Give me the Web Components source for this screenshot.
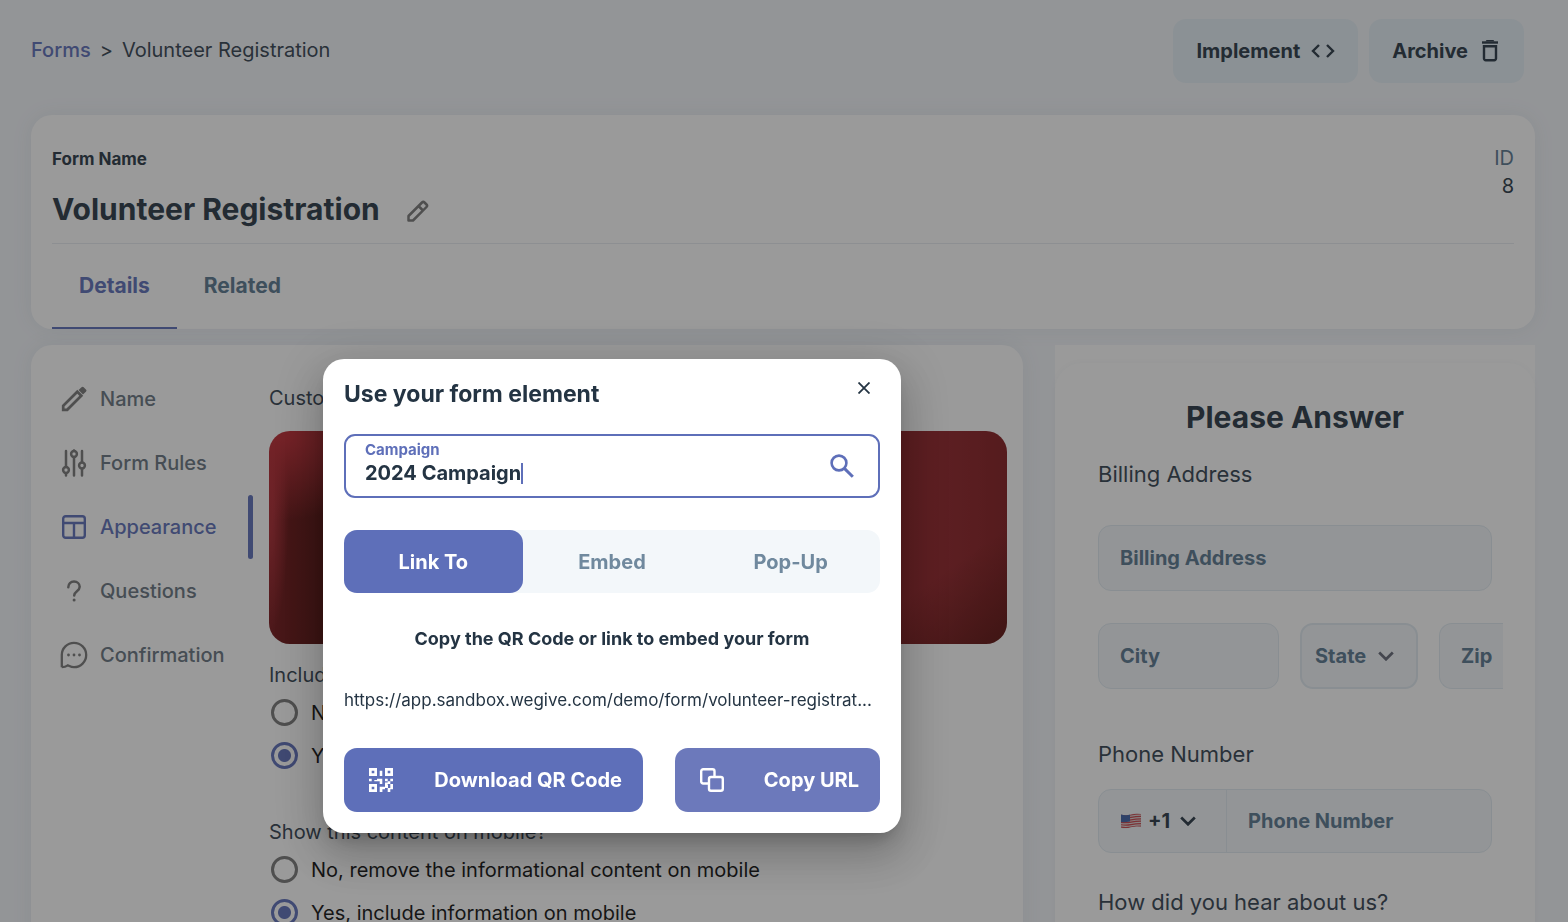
<!DOCTYPE html>
<html lang="en">
<head>
<meta charset="utf-8">
<meta name="viewport" content="width=device-width, initial-scale=1">
<title>Volunteer Registration</title>
<style>
  :root {
    --ink: #2a3946;
    --text: #354452;
    --muted: #5b7991;
    --primary: #5e6fb9;
    --field: #f3f6fa;
    --line: #e0eaf1;
    --page: #f3f6fa;
    --icon: #797979;
  }
  html, body { height: 100%; }
  body {
    margin: 0;
    overflow: hidden;
    background: var(--page);
    color: var(--ink);
    font-family: Inter, "Liberation Sans", sans-serif;
    font-size: 20px;
    line-height: 28px;
  }
</style>
</head>
<body>
<form-page></form-page>
<share-dialog></share-dialog>

<script>
const RESET = `*,*::before,*::after{box-sizing:border-box}
  button,input,select{font:inherit;color:inherit;margin:0}
  button{border:0;background:none;padding:0}
  h1,h2,h3,p{margin:0}`;

function define(name, html, extra) {
  const tpl = document.createElement('template');
  tpl.innerHTML = html.replace('<style>', '<style>' + RESET);
  customElements.define(name, class extends HTMLElement {
    constructor() {
      super();
      this.attachShadow({ mode: 'open' }).append(tpl.content.cloneNode(true));
    }
    connectedCallback() { if (extra) extra(this, this.shadowRoot); }
  });
}

/* ---------- icons ---------- */
const ICONS = {
  code: ['0 0 24 16', '<path d="M8 2 2 8l6 6M16 2l6 6-6 6" fill="none" stroke="currentColor" stroke-width="2.400"/>'],
  trash: ['-1 0 22 22', '<path d="M2 2.500h16" fill="none" stroke="currentColor" stroke-width="2.400"/><path d="M6.500 0h7l1 1.500h-9z" fill="currentColor"/><path d="M4 6.200h12v12.300a1.700 1.700 0 0 1-1.700 1.700H5.700A1.700 1.700 0 0 1 4 18.500z" fill="none" stroke="currentColor" stroke-width="2.400"/>'],
  edit: ['0 0 22 22', '<path d="M1.500 20.500v-4.500L15 2.500a1.800 1.800 0 0 1 2.500 0l2 2a1.800 1.800 0 0 1 0 2.500L6 20.500zM11.500 6l4.500 4.500" fill="none" stroke="currentColor" stroke-width="2.500" stroke-linejoin="round"/>'],
  pencil: ['0 0 26 26', '<path d="M2.200 23.800v-4L16.300 5.700l4 4L6.200 23.800z" fill="none" stroke="currentColor" stroke-width="2.700"/><path d="M17.600 4 20.500 1.300a1.500 1.500 0 0 1 2.200 0L24.900 3.500a1.500 1.500 0 0 1 0 2.200L22 8.400z" fill="currentColor"/>'],
  sliders: ['0 0 26 28', '<g fill="none" stroke="currentColor" stroke-width="2.500" stroke-linecap="round"><path d="M5 2v16M5 25v1.500M13 8v18.500M13 1.500V2M21 2v11M21 20v6.500"/><circle cx="5" cy="21" r="2.900"/><circle cx="13" cy="5" r="2.900"/><circle cx="21" cy="16.500" r="2.900"/></g>'],
  layout: ['0 0 26 26', '<g fill="none" stroke="currentColor" stroke-width="2.400"><rect x="2.200" y="2.200" width="21.600" height="21.600" rx="2.500"/><path d="M2 9h22M13 9v15"/></g>'],
  question: ['0 0 26 26', '<path d="M7.300 9.200C7.300 5.800 9.700 3.600 13 3.600s5.700 2.200 5.700 5.200c0 4.400-5.500 4.300-5.500 8.600" fill="none" stroke="currentColor" stroke-width="2.500" stroke-linecap="round"/><circle cx="13.100" cy="22" r="1.500" fill="currentColor"/>'],
  chat: ['0 0 28 28', '<path d="M1.800 26.200V14A12.200 12.200 0 1 1 14 26.200c-2.600 0-4-.9-6.200-1.900-1.600 1.200-3.400 1.900-6 1.900" fill="none" stroke="currentColor" stroke-width="2.300"/><g fill="currentColor"><circle cx="8.500" cy="14" r="1.400"/><circle cx="14" cy="14" r="1.400"/><circle cx="19.500" cy="14" r="1.400"/></g>'],
  chevron: ['0 0 16 10', '<path d="M1.200 1.500 8 8.300l6.800-6.800" fill="none" stroke="currentColor" stroke-width="2.700"/>'],
  close: ['0 0 12 12', '<path d="m.5.5 11 11M11.500.5l-11 11" stroke="currentColor" stroke-width="1.800"/>'],
  search: ['0 0 24 24', '<circle cx="9" cy="9" r="7.400" fill="none" stroke="currentColor" stroke-width="2.600"/><path d="m14.600 14.600 8.200 8.200" stroke="currentColor" stroke-width="3"/>'],
  qr: ['0 0 24 24', '<path fill-rule="evenodd" fill="currentColor" d="M0 0h8v8H0zM2.700 2.700v2.600h2.600V2.700zM16 0h8v8h-8zM18.700 2.700v2.600h2.600V2.700zM0 16h8v8H0zM2.700 18.700v2.600h2.600v-2.600zM10.700 2.700h2.600V8h-2.600zM0 10.700h2.700v2.600H0zM8 10.700h5.300V16h-2.600v-2.700H8zM5.300 12h2.700v1.300H5.300zM16 10.700h2.700v2.600H16zM21.300 10.700H24v2.600h-2.700zM18.700 13.300h2.600V16h-2.600zM16 14.500h2.700V17H16zM21.300 16H24v5.300h-2.700zM10.700 18.700h5.300v2.600h-2.600V24h-2.700zM16 17h3v3h-3zM18.700 20h2.600v4h-2.600z"/>'],
  copy: ['0 0 24 24', '<path d="M8 15.500H3.200a2 2 0 0 1-2-2V3.200a2 2 0 0 1 2-2h9.300a2 2 0 0 1 2 2V8" fill="none" stroke="currentColor" stroke-width="2.400"/><rect x="9" y="9" width="13.800" height="13.800" rx="2" fill="none" stroke="currentColor" stroke-width="2.400"/>'],
  flag: ['0 0 22 16', '<clipPath id="f"><path d="M1 1.500C5 3 8 2 11 1.200S18 0 21 1v13c-3-1-7-.5-10 .2S5 16 1 14.800z"/></clipPath><g clip-path="url(#f)"><path fill="#dcd6d6" d="M0 0h22v16H0z"/><path stroke="#c9444b" stroke-width="1.200" fill="none" d="M0 2q6 1 11 0t11-1M0 4.400q6 1 11 0t11-1M0 6.800q6 1 11 0t11-1M0 9.200q6 1 11 0t11-1M0 11.600q6 1 11 0t11-1M0 14q6 1 11 0t11-1"/><path fill="#3d62a8" d="M0 1h10v7.500q-5 1-10 .5z"/></g>']
};
customElements.define('ui-icon', class extends HTMLElement {
  constructor() { super(); this.attachShadow({ mode: 'open' }); }
  connectedCallback() {
    const [box, art] = ICONS[this.getAttribute('name')];
    const [, , w, h] = box.split(' ');
    this.shadowRoot.innerHTML = `<style>:host{display:inline-flex;flex:none}svg{display:block}</style>
      <svg width="${w}" height="${h}" viewBox="${box}" aria-hidden="true">${art}</svg>`;
  }
});

/* ---------- top bar ---------- */
define('soft-button', `<style>
  :host{display:block}
  button{display:flex;align-items:center;gap:11px;height:64px;padding:0 23px;border-radius:13px;background:#e4eff6;font-weight:700}
</style><button type="button"><slot></slot></button>`);

define('top-bar', `<style>
  :host{display:flex;justify-content:space-between;align-items:center;padding-right:11px}
  nav{display:flex;gap:9px;color:var(--text);padding-bottom:2px}
  a{color:var(--primary);font-weight:500;text-decoration:none}
  .actions{display:flex;gap:11px}
</style>
<nav aria-label="Breadcrumb"><a href="#forms">Forms</a><span>&gt;</span><span>Volunteer Registration</span></nav>
<div class="actions">
  <soft-button>Implement <ui-icon name="code"></ui-icon></soft-button>
  <soft-button>Archive <ui-icon name="trash"></ui-icon></soft-button>
</div>`);

/* ---------- form header card ---------- */
define('form-header', `<style>
  :host{display:block;background:#fff;border-radius:21px;padding:29px 21px 0;box-shadow:0 0 21px rgba(60,80,110,.08)}
  .top{display:flex;justify-content:space-between;padding-bottom:14px;border-bottom:1px solid #e8ecf0}
  .label{font-size:17px;font-weight:700;line-height:30px}
  .title{display:flex;align-items:center;gap:27px;margin-top:15px}
  h1{font-size:30px;line-height:40px;font-weight:700}
  .title button{color:var(--icon);display:flex;padding-top:4px}
  dl{margin:0;text-align:right}
  dt{color:var(--muted)} dd{margin:0}
  .tabs{display:flex}
  .tabs button{height:85px;padding:0 27px;font-size:21px;font-weight:700;color:var(--muted);border-bottom:2px solid transparent}
  .tabs button[aria-selected=true]{color:var(--primary);border-color:var(--primary)}
</style>
<div class="top">
  <div>
    <p class="label">Form Name</p>
    <div class="title"><h1>Volunteer Registration</h1><button type="button" aria-label="Edit name"><ui-icon name="edit"></ui-icon></button></div>
  </div>
  <dl><dt>ID</dt><dd>8</dd></dl>
</div>
<div class="tabs" role="tablist">
  <button type="button" role="tab" aria-selected="true">Details</button>
  <button type="button" role="tab" aria-selected="false">Related</button>
</div>`);

/* ---------- side navigation ---------- */
define('nav-item', `<style>
  :host{display:block;color:var(--icon)}
  a{display:grid;grid-template-columns:28px 1fr;align-items:center;gap:12px;height:64px;padding-left:29px;color:inherit;text-decoration:none;font-weight:500;border-right:5px solid transparent}
  ui-icon{justify-self:center}
  span{color:#687581}
  :host([current]) a{position:relative}
  :host([current]), :host([current]) span{color:var(--primary)}
  :host([current]) a::after{content:"";position:absolute;right:-5px;top:0;bottom:0;width:5px;border-radius:3px;background:var(--primary)}
</style><a href="#"><ui-icon name="pencil"></ui-icon><span><slot></slot></span></a>`,
(host, root) => {
  const icon = root.querySelector('ui-icon');
  const fresh = document.createElement('ui-icon');
  fresh.setAttribute('name', host.getAttribute('icon'));
  icon.replaceWith(fresh);
});

define('side-nav', `<style>
  :host{display:block;width:222px;flex:none;padding-top:22px}
</style>
<nav aria-label="Form sections">
  <nav-item icon="pencil">Name</nav-item>
  <nav-item icon="sliders">Form Rules</nav-item>
  <nav-item icon="layout" current>Appearance</nav-item>
  <nav-item icon="question">Questions</nav-item>
  <nav-item icon="chat">Confirmation</nav-item>
</nav>`);

/* ---------- appearance settings ---------- */
define('radio-list', `<style>
  :host{display:block}
  fieldset{border:0;margin:0;padding:0;min-width:0}
  legend{padding:0;color:var(--text);margin-bottom:2px}
  label{display:flex;align-items:center;gap:13px;height:43px;padding-left:2px;line-height:18px;color:#121212}
  input{appearance:none;width:27px;height:27px;border:3px solid var(--icon);border-radius:50%;flex:none}
  input:checked{border-color:var(--primary);background:radial-gradient(circle,var(--primary) 6px,transparent 7px)}
</style>
<fieldset><legend></legend></fieldset>`,
(host, root) => {
  const set = root.querySelector('fieldset');
  if (set.children.length > 1) return;
  root.querySelector('legend').textContent = host.getAttribute('question');
  host.getAttribute('options').split('|').forEach((text, i) => {
    const label = document.createElement('label');
    const input = document.createElement('input');
    input.type = 'radio';
    input.name = 'choice';
    input.defaultChecked = i === 1;
    label.append(input, text);
    set.append(label);
  });
});

define('appearance-settings', `<style>
  :host{display:block;flex:1;min-width:0;padding:39px 16px 0}
  p{color:var(--text)}
  .banner{height:213px;margin:19px 0 17px;border-radius:21px;
    background:
      radial-gradient(ellipse 110px 90px at 10px 0,#bc2a33 10%,transparent),
      radial-gradient(ellipse 20px 130px at 0 35%,#a82830 20%,transparent),
      linear-gradient(325deg,rgba(70,10,5,.65),transparent 16%),
      linear-gradient(90deg,#74161a,#55100e 7%,#450e0a 16%,#85181b 70%,#8c1f23 84%,#93242a 90%,#841c20)}
  radio-list + radio-list{margin-top:41px}
</style>
<p>Custom</p>
<div class="banner" role="img" aria-label="Red fabric banner"></div>
<radio-list question="Include content?" options="No|Yes"></radio-list>
<radio-list question="Show this content on mobile?" options="No, remove the informational content on mobile|Yes, include information on mobile"></radio-list>`);

/* ---------- form preview ---------- */
define('form-preview', `<style>
  :host{display:block;background:#fff;padding-top:18px}
  form{border-radius:27px;padding:34px 32px 0 43px;box-shadow:0 0 6px rgba(60,80,110,.04);height:100%}
  h2{font-size:30px;line-height:40px;font-weight:700;text-align:center;padding-right:11px}
  label,.q{display:block;font-size:22px;line-height:32px;color:var(--text)}
  .q1{margin:21px 0 35px}
  input,select{height:66px;border:1px solid var(--line);border-radius:13px;background:var(--field);padding:0 21px;font-weight:700;color:var(--muted);min-width:0}
  input::placeholder{color:var(--muted);opacity:1}
  .full{width:calc(100% - 11px);display:block}
  .row{display:grid;grid-template-columns:181fr 118fr 64fr;gap:21px;margin:32px 0 49px}
  .row input{width:100%}
  .row input:last-child{border-right:0;border-radius:13px 0 0 13px;padding-right:0}
  .state{display:grid;align-items:center}
  .state>*{grid-area:1/1}
  .state select{appearance:none;width:100%;border-width:2px;padding:0 13px}
  .state ui-icon{justify-self:end;margin-right:24px;color:#656977;pointer-events:none}
  .phone{display:flex;width:calc(100% - 11px);height:64px;margin:19px 0 33px;border:1px solid var(--line);border-radius:13px;background:var(--field);overflow:hidden}
  .phone button{display:flex;align-items:center;gap:6px;width:128px;flex:none;padding-left:21px;border-right:1px solid var(--line);font-weight:700}
  .phone button ui-icon:last-child{margin-left:4px}
  .phone input{flex:1;height:100%;border:0;border-radius:0;background:none}
</style>
<form>
  <h2>Please Answer</h2>
  <label class="q1" for="addr">Billing Address</label>
  <input class="full" id="addr" placeholder="Billing Address">
  <div class="row">
    <input aria-label="City" placeholder="City">
    <span class="state"><select aria-label="State"><option>State</option></select><ui-icon name="chevron"></ui-icon></span>
    <input aria-label="Zip" placeholder="Zip">
  </div>
  <label for="phone">Phone Number</label>
  <div class="phone">
    <button type="button" aria-label="Country code"><ui-icon name="flag"></ui-icon>+1<ui-icon name="chevron"></ui-icon></button>
    <input id="phone" placeholder="Phone Number">
  </div>
  <p class="q">How did you hear about us?</p>
</form>`);

/* ---------- page ---------- */
define('form-page', `<style>
  :host{display:flex;flex-direction:column;gap:16px;height:100%;overflow:hidden;padding:19px 33px 0 31px;box-sizing:border-box}
  top-bar{margin-bottom:16px}
  .columns{display:grid;grid-template-columns:minmax(0,1fr) 480px;gap:32px;flex:none}
  .settings{display:flex;background:#fff;border-radius:21px 21px 0 0;padding-bottom:40px;box-shadow:0 0 21px rgba(60,80,110,.08)}
</style>
<top-bar></top-bar>
<form-header></form-header>
<div class="columns">
  <section class="settings"><side-nav></side-nav><appearance-settings></appearance-settings></section>
  <form-preview></form-preview>
</div>`);

/* ---------- dialog ---------- */
define('share-dialog', `<style>
  :host{position:fixed;inset:0;display:flex;align-items:center;justify-content:center;padding:270px 344px 0 0;background:rgba(26,26,26,.445)}
  .panel{width:578px;max-width:100%;background:#fff;border-radius:21px;padding:21px;color:#243443;
    box-shadow:0 11px 15px -7px rgba(0,0,0,.2),0 24px 38px 3px rgba(0,0,0,.14),0 9px 46px 8px rgba(0,0,0,.12)}
  header{display:flex;justify-content:space-between;align-items:flex-start}
  h2{font-size:23px;line-height:28px;font-weight:700}
  header button{display:flex;padding:2px 10px}
  .field{display:flex;align-items:center;height:64px;margin-top:26px;padding:0 24px 0 19px;border:2px solid var(--primary);border-radius:11px;color:var(--primary)}
  .field div{flex:1;min-width:0;padding-bottom:6px}
  .field label{display:block;font-size:15px;line-height:20px;font-weight:700}
  .entry{display:flex;align-items:center}
  .entry input{field-sizing:content;border:0;outline:0;padding:0;background:none;height:26px;font-weight:700;color:#243443}
  .caret{width:2px;height:21px;background:var(--primary)}
  .tabs{display:grid;grid-template-columns:repeat(3,1fr);margin-top:32px;border-radius:13px;background:#f3f7fa}
  .tabs button{height:63px;border-radius:13px;font-weight:700;color:#70899e}
  .tabs [aria-selected=true]{background:var(--primary);color:#fff}
  h3{font-size:18px;line-height:28px;font-weight:700;text-align:center;margin-top:32px}
  .url{font-size:17px;line-height:28px;margin-top:33px;white-space:nowrap;overflow:hidden;text-overflow:ellipsis}
  footer{display:grid;grid-template-columns:299fr 205fr;gap:32px;margin-top:34px}
  footer button{display:flex;align-items:center;justify-content:space-between;height:64px;padding:0 21px 0 25px;border-radius:13px;background:var(--primary);color:#fff;font-weight:700}
  footer .copy{background:#6c79bb}
</style>
<section class="panel" role="dialog" aria-modal="true" aria-labelledby="t">
  <header><h2 id="t">Use your form element</h2><button type="button" aria-label="Close"><ui-icon name="close"></ui-icon></button></header>
  <div class="field">
    <div><label for="c">Campaign</label><span class="entry"><input id="c" value="2024 Campaign"><span class="caret"></span></span></div>
    <ui-icon name="search"></ui-icon>
  </div>
  <div class="tabs" role="tablist">
    <button type="button" role="tab" aria-selected="true">Link To</button>
    <button type="button" role="tab" aria-selected="false">Embed</button>
    <button type="button" role="tab" aria-selected="false">Pop-Up</button>
  </div>
  <h3>Copy the QR Code or link to embed your form</h3>
  <p class="url">https://app.sandbox.wegive.com/demo/form/volunteer-registrat...</p>
  <footer>
    <button type="button" class="qr"><ui-icon name="qr"></ui-icon>Download QR Code</button>
    <button type="button" class="copy"><ui-icon name="copy"></ui-icon>Copy URL</button>
  </footer>
</section>`);
</script>
</body>
</html>
